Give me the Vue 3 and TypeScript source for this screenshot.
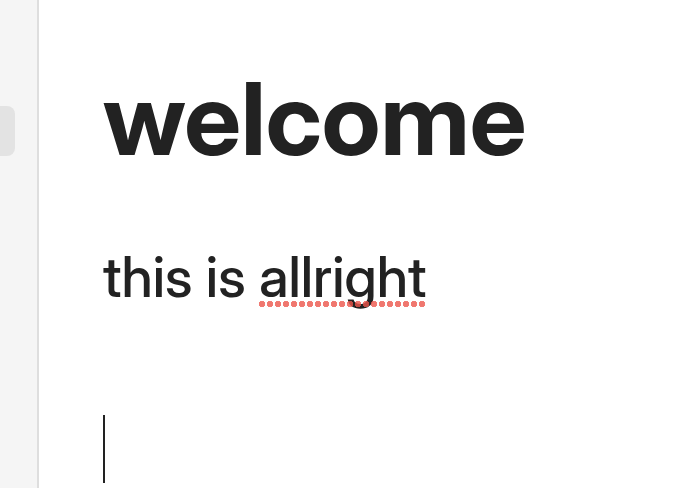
<script setup lang="ts">
import { ref } from 'vue'

const title = ref('welcome')
</script>

<template>
  <div class="app">
    <aside class="sidebar">
      <div class="selected"></div>
    </aside>
    <main class="editor">
      <h1>{{ title }}</h1>
      <p>this is <span class="misspelled">allright</span></p>
      <p class="current"><span class="caret"></span></p>
    </main>
  </div>
</template>

<style>
body {
  margin: 0;
  background: #fff;
}
</style>

<style scoped>
.app {
  display: flex;
  min-height: 100vh;
  font-family: "Inter Display", Inter, "Liberation Sans", sans-serif;
  color: #222;
}

.sidebar {
  box-sizing: border-box;
  flex: none;
  width: 39px;
  padding-top: 106px;
  background: #f5f5f5;
  border-right: 2px solid #dedede;
}

.selected {
  width: 15px;
  height: 50px;
  background: #e3e3e3;
  border-radius: 0 8px 8px 0;
}

.editor {
  flex: 1;
  min-width: 0;
  padding: 58px 64px 0;
}

h1 {
  margin: 0 0 59px;
  font-size: 101px;
  line-height: 120px;
  font-weight: 700;
}

p {
  margin: 0;
  font-size: 56px;
  line-height: 80px;
  font-weight: 500;
}

.misspelled {
  position: relative;
}

.misspelled::after {
  content: "";
  position: absolute;
  left: 0;
  right: 0;
  bottom: 4px;
  height: 6px;
  background: radial-gradient(circle at 3px 3px, rgb(236 85 75 / 80%) 2px, rgb(236 85 75 / 76%) 3px, transparent 3px) 0 0 / 8px 6px repeat-x;
}

.current {
  margin-top: 98px;
}

.caret {
  display: block;
  width: 2px;
  height: 68px;
  background: #222;
}
</style>
